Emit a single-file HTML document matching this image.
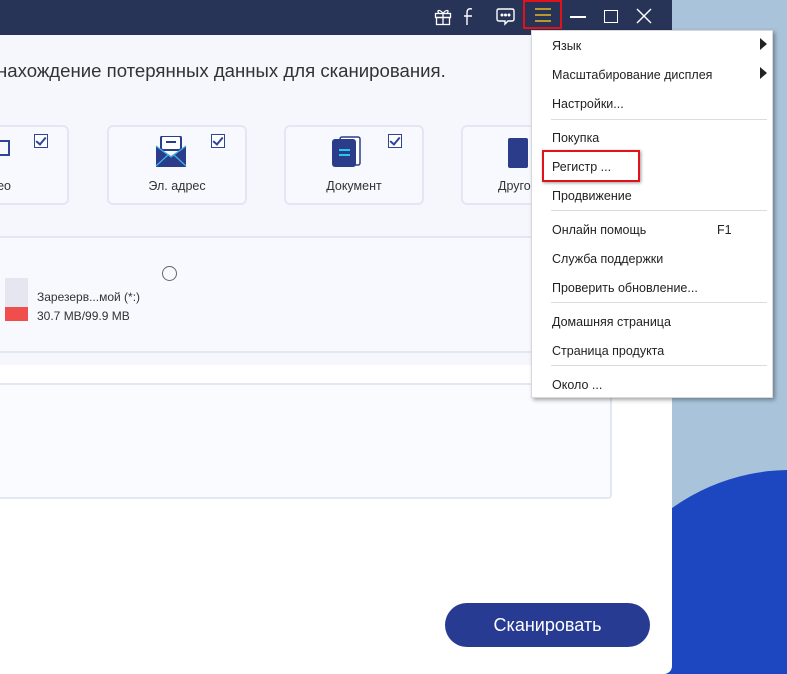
<!DOCTYPE html>
<html style="width:787px;height:674px;overflow:hidden"><head><meta charset="utf-8"><style>
*{margin:0;padding:0;box-sizing:border-box}
body{width:787px;height:674px;overflow:hidden;position:relative;background:#a9c3da;font-family:"Liberation Sans","DejaVu Sans",sans-serif}
.a{position:absolute}
.app{left:0;top:0;width:672px;height:674px;background:#fff;border-bottom-right-radius:8px;overflow:hidden}
.bar{left:0;top:0;width:672px;height:35px;background:#283358}
.content{left:0;top:35px;width:672px;height:330px;background:#f5f7fd}
.card{top:125px;width:140px;height:80px;border:2px solid #e3e7f3;border-radius:6px;background:#f7f9fe;font-size:12.5px;color:#333;text-align:center}
.chk{width:14px;height:14px;border:1.5px solid #2f4598;background:#fff}
.chk::after{content:"";position:absolute;left:3px;top:0px;width:4px;height:8px;border-right:2px solid #2f4598;border-bottom:2px solid #2f4598;transform:rotate(40deg)}
.menu{left:531px;top:30px;width:242px;height:368px;background:#fff;box-shadow:2px 2px 4px rgba(0,0,0,.35);border:1px solid #d8d8d8}
.mi{position:absolute;left:20px;font-size:12.5px;color:#222;line-height:16px}
.sep{position:absolute;left:19px;width:216px;height:1px;background:#dcdcdc}
</style></head><body>
<div class="a" style="left:0;top:0;width:787px;height:674px;overflow:hidden">
 <div class="a" style="left:580px;top:470px;width:420px;height:440px;border-radius:50%;background:#1d47c0"></div>
</div>
<div class="a app">
 <div class="a content"></div>
 <div class="a bar"></div>
 <div class="a" style="left:-3px;top:60px;font-size:18.6px;color:#333;white-space:nowrap">нахождение потерянных данных для сканирования.</div>
 <div class="a card" style="left:-71px"><div class="a" style="right:56px;top:52px">Видео</div></div>
 <div class="a chk" style="left:34px;top:134px"></div>
 <div class="a" style="left:0;top:140px;width:10px;height:16px;border:2px solid #2f4598;border-left:none"></div>
 <div class="a card" style="left:107px"><div class="a" style="left:0;top:52px;width:136px">Эл. адрес</div></div>
 <div class="a chk" style="left:211px;top:134px"></div>
 <svg class="a" style="left:155px;top:136px" width="32" height="32"><rect x="6" y="0" width="20" height="14" rx="2" fill="#fff" stroke="#2a3c8a" stroke-width="2"/><line x1="11" y1="6" x2="21" y2="6" stroke="#2a3c8a" stroke-width="2"/><path d="M1 10 L16 20 L31 10 V31 H1Z" fill="#2a3c8a"/><path d="M1 30 L13 19 M31 30 L19 19 M1 10 L16 21 L31 10" stroke="#3bb5e8" stroke-width="1.2" fill="none"/></svg>
 <div class="a card" style="left:284px"><div class="a" style="left:0;top:52px;width:136px">Документ</div></div>
 <div class="a chk" style="left:388px;top:134px"></div>
 <svg class="a" style="left:331px;top:136px" width="32" height="32"><rect x="9" y="1" width="20" height="28" rx="2" fill="#fff" stroke="#2a3c8a" stroke-width="1.5"/><rect x="1" y="3" width="24" height="28" rx="3" fill="#2a3c8a"/><line x1="8" y1="14" x2="19" y2="14" stroke="#27c8f0" stroke-width="2"/><line x1="8" y1="19" x2="19" y2="19" stroke="#27c8f0" stroke-width="2"/></svg>
 <div class="a card" style="left:461px"><div class="a" style="left:35px;top:52px">Другое</div></div>
 <div class="a" style="left:508px;top:138px;width:20px;height:30px;background:#2a3c8a;border-radius:2px"></div>
 <div class="a" style="left:-5px;top:236px;width:680px;height:117px;border-top:2px solid #e3e7f3;border-bottom:2px solid #e3e7f3;background:#f7f9fe"></div>
 <div class="a" style="left:-5px;top:383px;width:617px;height:116px;border:2px solid #e3e7f3;border-radius:4px;background:#fafbfe"></div>
 <div class="a" style="left:162px;top:266px;width:15px;height:15px;border:1.2px solid #666;border-radius:50%"></div>
 <div class="a" style="left:5px;top:278px;width:23px;height:29px;background:#e4e6f0"></div>
 <div class="a" style="left:5px;top:307px;width:23px;height:14px;background:#f04d4d"></div>
 <div class="a" style="left:37px;top:290px;font-size:12px;color:#333">Зарезерв...мой (*:)</div>
 <div class="a" style="left:37px;top:309px;font-size:12px;color:#333">30.7 MB/99.9 MB</div>
 <div class="a" style="left:445px;top:603px;width:205px;height:44px;border-radius:22px;background:#283b93;color:#fff;font-size:18px;text-align:center;line-height:44px">Сканировать</div>
 <svg class="a" style="left:433px;top:6px" width="20" height="20" fill="none" stroke="#fff" stroke-width="1.3"><rect x="2.5" y="7.5" width="15" height="4"/><rect x="3.5" y="11.5" width="13" height="7"/><line x1="10" y1="7.5" x2="10" y2="18.5"/><path d="M10 7.5 C7 3 3 4 6 7.5 M10 7.5 C13 3 17 4 14 7.5"/></svg>
 <svg class="a" style="left:462px;top:6px" width="14" height="20" fill="none" stroke="#fff" stroke-width="1.4"><path d="M10 3 C6 2 5 4 5 7 V19 M2 10 H10"/></svg>
 <svg class="a" style="left:495px;top:6px" width="22" height="22" fill="none" stroke="#fff" stroke-width="1.4"><path d="M4 3 H17 Q19 3 19 5 V13 Q19 15 17 15 H13 L10 18 V15 H4 Q2 15 2 13 V5 Q2 3 4 3Z"/><circle cx="7" cy="9" r=".8" fill="#fff"/><circle cx="10.5" cy="9" r=".8" fill="#fff"/><circle cx="14" cy="9" r=".8" fill="#fff"/></svg>
 <div class="a" style="left:523px;top:0;width:39px;height:29px;border:2px solid #e0131b"></div>
 <svg class="a" style="left:533px;top:6px" width="20" height="18" stroke="#f2c31c" stroke-width="1.4"><line x1="2" y1="3" x2="18" y2="3"/><line x1="2" y1="9" x2="18" y2="9"/><line x1="2" y1="15" x2="18" y2="15"/></svg>
 <div class="a" style="left:570px;top:16px;width:16px;height:1.5px;background:#fff"></div>
 <div class="a" style="left:604px;top:10px;width:14px;height:13px;border:1.5px solid #fff"></div>
 <svg class="a" style="left:636px;top:8px" width="16" height="16" stroke="#fff" stroke-width="1.4"><line x1="1" y1="1" x2="15" y2="15"/><line x1="15" y1="1" x2="1" y2="15"/></svg>
</div>
<div class="a menu">
 <div class="mi" style="top:7px">Язык</div><div class="a" style="left:228px;top:7px;border-left:7px solid #222;border-top:6px solid transparent;border-bottom:6px solid transparent"></div>
 <div class="mi" style="top:36px">Масштабирование дисплея</div><div class="a" style="left:228px;top:36px;border-left:7px solid #222;border-top:6px solid transparent;border-bottom:6px solid transparent"></div>
 <div class="mi" style="top:65px">Настройки...</div>
 <div class="sep" style="top:88px"></div>
 <div class="mi" style="top:99px">Покупка</div>
 <div class="mi" style="top:128px">Регистр ...</div>
 <div class="a" style="left:10px;top:119px;width:98px;height:32px;border:2.5px solid #e0131b;box-shadow:1px 1px 3px rgba(0,0,0,.4)"></div>
 <div class="mi" style="top:157px">Продвижение</div>
 <div class="sep" style="top:179px"></div>
 <div class="mi" style="top:191px">Онлайн помощь</div><div class="mi" style="left:185px;top:191px">F1</div>
 <div class="mi" style="top:220px">Служба поддержки</div>
 <div class="mi" style="top:249px">Проверить обновление...</div>
 <div class="sep" style="top:271px"></div>
 <div class="mi" style="top:283px">Домашняя страница</div>
 <div class="mi" style="top:312px">Страница продукта</div>
 <div class="sep" style="top:334px"></div>
 <div class="mi" style="top:346px">Около ...</div>
</div>
</body></html>
